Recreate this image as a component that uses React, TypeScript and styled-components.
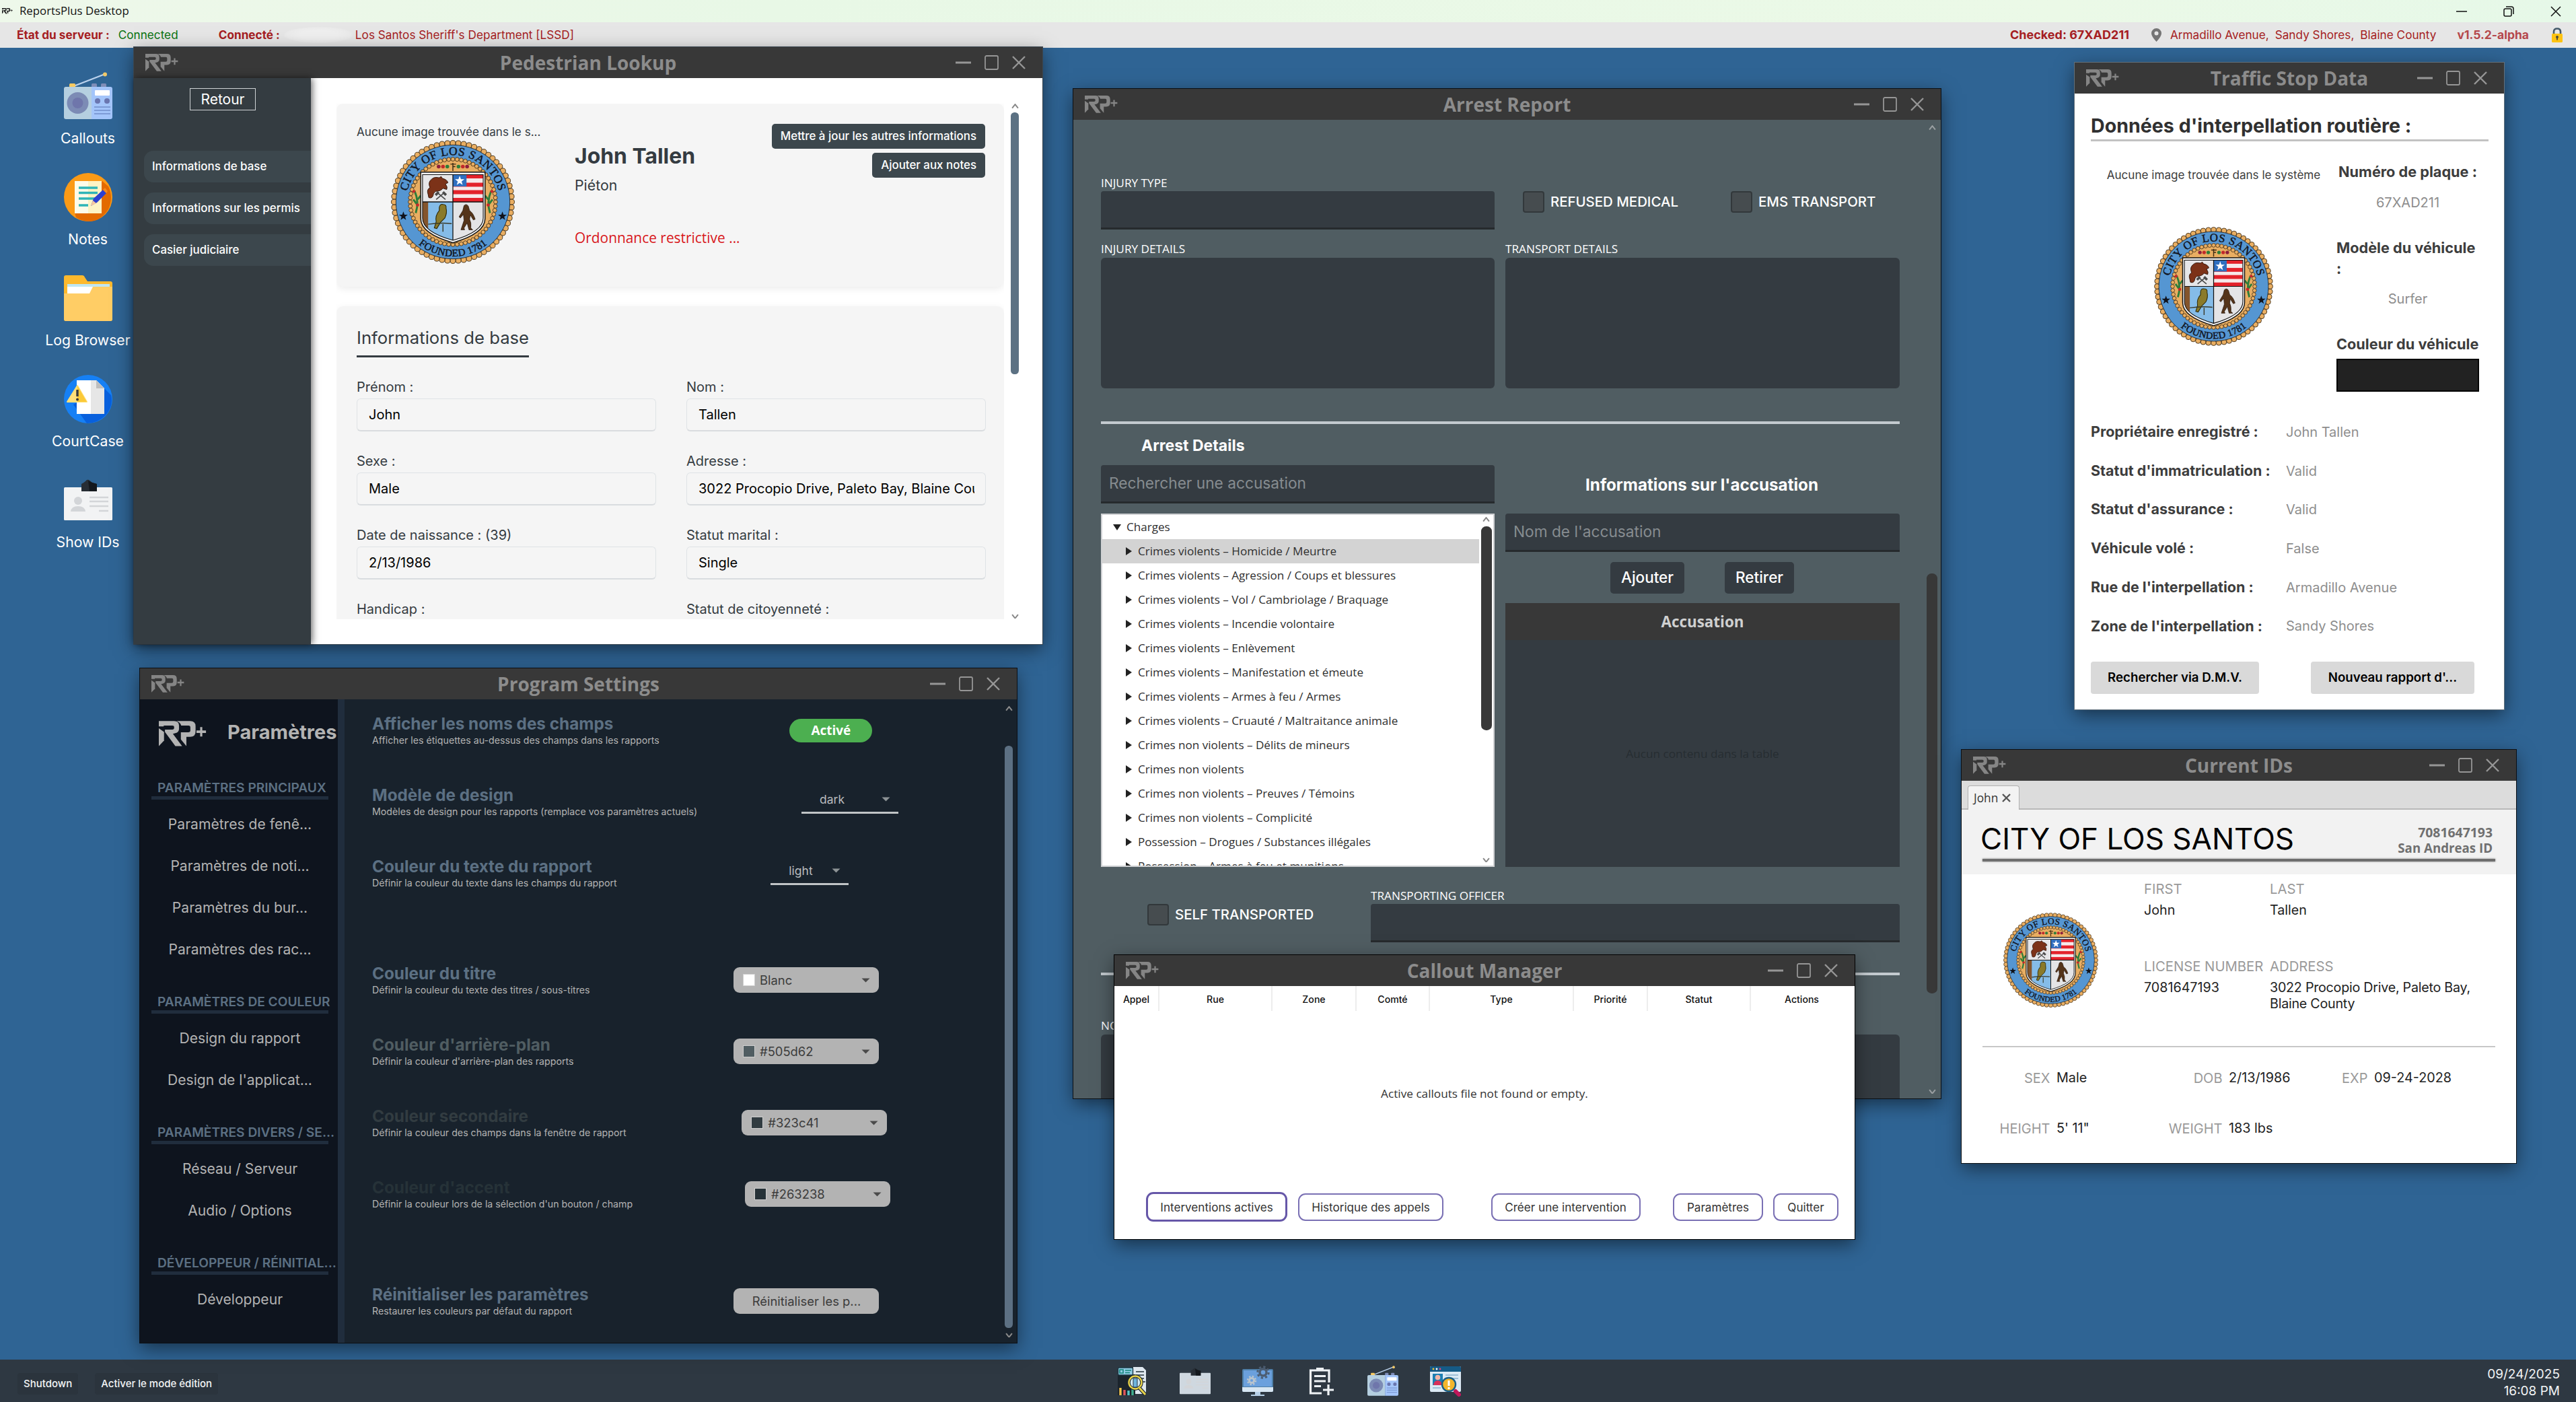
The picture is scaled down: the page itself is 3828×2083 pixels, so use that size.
import React from 'react';
import styled, { createGlobalStyle, css } from 'styled-components';

const INTER = '"Inter", "Liberation Sans", sans-serif';
const SEGOE = '"Open Sans", "Noto Sans", sans-serif';

const GlobalStyle = createGlobalStyle`
  *, *::before, *::after { box-sizing: border-box; }
  html, body { margin: 0; padding: 0; }
  body { width: 3828px; height: 2083px; overflow: hidden; background: #2f6494; font-family: ${INTER}; }
  button { font: inherit; margin: 0; padding: 0; border: 0; background: none; color: inherit; }
  svg { display: block; flex: none; }
`;

/* ---------- shell ---------- */

const Screen = styled.div`
  position: relative;
  display: flex;
  flex-direction: column;
  width: 3828px;
  height: 2083px;
  overflow: hidden;
  background: #2f6494;
  white-space: nowrap;
  line-height: 1;
`;

const OsBar = styled.header`
  display: flex;
  align-items: center;
  height: 33px;
  padding: 0 22px 0 3px;
  background: linear-gradient(90deg, #eef8ea, #e8f8e6 30%, #ebf9e7 80%, #e6f8e8);
  color: #111;
  font-family: ${SEGOE};
  font-size: 16.8px;
`;
const OsTitle = styled.span`
  margin-left: 10px;
  flex: 1;
`;
const OsControls = styled.div`
  display: flex;
  align-items: center;
  gap: 54px;
`;

const StatusBar = styled.div`
  display: flex;
  align-items: center;
  height: 38px;
  padding: 0 20px 0 25px;
  background: #e6e6e6;
  color: #a51d22;
  font-size: 17.2px;
`;
const StatusLabel = styled.span<{ $gap?: number }>`
  margin-left: ${p => p.$gap || 0}px;
  font-weight: 700;
`;
const StatusValue = styled.span<{ $ok?: boolean; $gap?: number }>`
  margin-left: ${p => p.$gap || 0}px;
  color: ${p => (p.$ok ? '#0a7310' : '#a51d22')};
`;
const HiddenName = styled.div`
  width: 102px;
  height: 24px;
  margin: 0 4px 0 6px;
  border-radius: 50% 30% 40% 50%;
  background: radial-gradient(ellipse, #efefef 40%, #ebebeb 65%, #e6e6e6 75%);
`;
const StatusRight = styled.div`
  display: flex;
  align-items: center;
  margin-left: auto;
`;
const CheckedPlate = styled.span`
  margin-right: 33px;
  font-size: 18px;
  font-weight: 700;
`;
const Place = styled.div`
  display: flex;
  gap: 9px;
  margin: 0 31px 0 13px;
`;
const Version = styled.span`
  margin-right: 34px;
  color: #b5484c;
  font-size: 17.5px;
  font-weight: 700;
`;

const Desktop = styled.main`
  flex: 1;
  padding: 36px 0 0 50px;
`;
const Shortcuts = styled.div`
  display: flex;
  flex-direction: column;
  gap: 38px;
  width: 161px;
`;
const Shortcut = styled.div`
  display: flex;
  flex-direction: column;
  align-items: center;
  gap: 13px;
  height: 112px;
  color: #fff;
  font-size: 21.2px;
  line-height: 26px;
`;

const Taskbar = styled.footer`
  display: grid;
  grid-template-columns: 1fr auto 1fr;
  align-items: center;
  height: 63px;
  padding: 0 24px 0 26px;
  background: #2e3842;
  color: #f2f4f5;
`;
const TaskLeft = styled.div`
  display: flex;
  gap: 25px;
  padding-top: 8px;
`;
const TaskButton = styled.button`
  height: 32px;
  padding: 0 9px;
  border-radius: 4px;
  background: #2b343d;
  font-size: 15px;
  font-weight: 500;
`;
const TaskIcons = styled.div`
  display: flex;
  gap: 47px;
`;
const Clock = styled.div`
  justify-self: end;
  padding-top: 5px;
  text-align: right;
  font-size: 19px;
  line-height: 25px;
`;

/* ---------- window ---------- */

const Frame = styled.section<{ $x: number; $y: number; $w: number; $h: number; $edge?: string }>`
  position: absolute;
  left: ${p => p.$x}px;
  top: ${p => p.$y}px;
  display: flex;
  flex-direction: column;
  width: ${p => p.$w}px;
  height: ${p => p.$h}px;
  background: #fff;
  box-shadow: 0 0 0 1px ${p => p.$edge || '#0b0f14'}, 0 8px 26px rgba(0, 0, 0, 0.5);
`;
const TitleBar = styled.div`
  display: grid;
  grid-template-columns: 1fr auto 1fr;
  align-items: center;
  flex: none;
  height: 46px;
  padding: 0 17px;
  background: #383838;
  color: #8c8c8c;
`;
const WinTitle = styled.h2`
  margin: 0;
  font-family: ${SEGOE};
  font-size: 28px;
  font-weight: 700;
  line-height: 40px;
`;
const WinControls = styled.div`
  display: flex;
  justify-content: flex-end;
  align-items: center;
  gap: 20px;
  padding-right: 8px;
`;

const Logo = ({ w, color }: { w: number; color: string }) => (
  <svg width={w} height={w * 0.53} viewBox="0 0 156 82" fill={color}>
    <path d="M0 0H50Q66 0 66 15V26Q66 37 54 40L46 42 76 82H54L20 36V28H44Q50 28 50 23V20Q50 15 44 15H16V18H0Z" />
    <path d="M0 24L17 36V64L0 82Z" />
    <path d="M58 0H102Q120 0 120 17V35Q120 52 102 52H90V82L72 60V37H96Q103 37 103 31V21Q103 15 97 15H73Q71 5 58 0Z" />
    <path d="M135 20h7v11h12v8h-12v12h-7V39h-12v-8h12Z" />
  </svg>
);

const Controls = () => (
  <WinControls>
    <svg width="23" height="24" viewBox="0 0 23 24"><path d="M0 12H23" stroke="#969696" strokeWidth="3" /></svg>
    <svg width="21" height="24" viewBox="0 0 21 24"><rect x="1" y="2" width="19" height="20" rx="2" fill="none" stroke="#969696" strokeWidth="1.8" /></svg>
    <svg width="20" height="24" viewBox="0 0 20 24"><path d="M1 3L19 21M19 3L1 21" stroke="#969696" strokeWidth="2.4" /></svg>
  </WinControls>
);

type WinProps = { x: number; y: number; w: number; h: number; title: string; edge?: string; children: React.ReactNode };
const Win = ({ x, y, w, h, title, edge, children }: WinProps) => (
  <Frame $x={x} $y={y} $w={w} $h={h} $edge={edge}>
    <TitleBar>
      <Logo w={49} color="#858585" />
      <WinTitle>{title}</WinTitle>
      <Controls />
    </TitleBar>
    {children}
  </Frame>
);

const Chevron = ({ down, color = '#888', w = 11 }: { down?: boolean; color?: string; w?: number }) => (
  <svg width={w} height={w * 0.7} viewBox="0 0 10 7">
    <path d={down ? 'M1 1L5 6L9 1' : 'M1 6L5 1L9 6'} fill="none" stroke={color} strokeWidth="1.8" />
  </svg>
);

/* ---------- seal ---------- */

const ring = (n: number, r: number, size: number) =>
  Array.from({ length: n }, (_, i) => {
    const a = (i / n) * Math.PI * 2;
    return <circle key={i} cx={Math.cos(a) * r} cy={Math.sin(a) * r} r={size} />;
  });

const STAR = 'M0 -6L1.5 -1.9 5.7 -1.9 2.3 .7 3.5 4.9 0 2.4 -3.5 4.9 -2.3 .7 -5.7 -1.9 -1.5 -1.9Z';

const Seal = ({ size, id }: { size: number; id: string }) => (
  <svg width={size} height={size} viewBox="-100 -100 200 200">
    <defs>
      <path id={`${id}-top`} d="M-73 20A75.700 75.700 0 1 1 73 20" />
      <path id={`${id}-low`} d="M-88 0A88 88 0 0 0 88 0" />
      <clipPath id={`${id}-shield`}><path d="M-49 -44H49V26Q49 48 0 62Q-49 48 -49 26Z" /></clipPath>
    </defs>
    <g fill="#e9ae62" stroke="#3b2a14" strokeWidth="1">{ring(68, 95, 4.4)}</g>
    <circle r="92" fill="#5596d2" stroke="#2a2a2a" strokeWidth="1" />
    <circle r="70" fill="#e9ae62" />
    <g fill="#e9ae62" stroke="#3b2a14" strokeWidth="0.9">{ring(64, 69, 3.2)}</g>
    <g fontFamily="'Liberation Serif', serif" fill="#10131c" stroke="#10131c" strokeWidth="0.5">
      <text fontSize="19">
        <textPath href={`#${id}-top`} startOffset="50%" textAnchor="middle" textLength="203">CITY OF LOS SANTOS</textPath>
      </text>
      <text fontSize="16.5">
        <textPath href={`#${id}-low`} startOffset="50%" textAnchor="middle" textLength="120">FOUNDED 1781</textPath>
      </text>
    </g>
    <path d={STAR} transform="translate(-80 23) scale(1.25)" fill="#10131c" />
    <path d={STAR} transform="translate(80 23) scale(1.25)" fill="#10131c" />
    <g>
      <path d="M0 -63V-50M-4 -61H5M0 -57H4" stroke="#3b2a14" strokeWidth="1.6" />
      <circle cx="-23" cy="-57" r="3" fill="#8d1f3c" /><circle cx="-16" cy="-57" r="3" fill="#c22a2a" />
      <circle cx="-9" cy="-57" r="3" fill="#2e7d3a" /><circle cx="9" cy="-57" r="3" fill="#2e7d3a" />
      <circle cx="16" cy="-57" r="3" fill="#c22a2a" /><circle cx="23" cy="-57" r="3" fill="#8d1f3c" />
    </g>
    <path d="M-60 18Q-54 0 -62 -18M-58 4L-64 -4M-57 -4L-52 -10" stroke="#2e7d3a" strokeWidth="3.2" fill="none" />
    <path d="M60 18Q54 0 62 -18M58 4L64 -4M57 -4L52 -10" stroke="#2e7d3a" strokeWidth="3.2" fill="none" />
    <g fill="#c8272c"><circle cx="-63" cy="-17" r="2.4" /><circle cx="-57" cy="5" r="2.6" /><circle cx="63" cy="-17" r="2.4" /><circle cx="57" cy="5" r="2.6" /></g>
    <path d="M-52 -48H52V27Q52 51 0 66Q-52 51 -52 27Z" fill="#f4f4f4" stroke="#111" strokeWidth="1.6" />
    <g clipPath={`url(#${id}-shield)`}>
      <rect x="-49" y="-44" width="49" height="44" fill="#e6e6e8" />
      <rect x="0" y="-44" width="49" height="44" fill="#f6e9ea" />
      <g fill="#e3222b">
        <rect x="0" y="-44" width="49" height="6" /><rect x="0" y="-31" width="49" height="6.5" />
        <rect x="0" y="-19" width="49" height="6.5" /><rect x="0" y="-6.5" width="49" height="6.5" />
      </g>
      <rect x="0" y="-44" width="22" height="19" fill="#2f6fc0" />
      <path d={STAR} transform="translate(11 -34) scale(1.35)" fill="#fff" />
      <rect x="-49" y="0" width="49" height="64" fill="#85bce8" />
      <rect x="0" y="0" width="49" height="64" fill="#e4e4e6" />
      <rect x="-49" y="0" width="9" height="64" fill="#84552c" />
      <path d="M-40 -12Q-43 -20 -37 -23Q-41 -32 -34 -37Q-30 -41 -22 -39L-19 -41 -17 -38Q-9 -36 -8 -31L-12 -29Q-8 -24 -10 -20L-16 -22Q-20 -17 -28 -17Q-32 -14 -32 -10Q-34 -5 -39 -7Z" fill="#7c3218" stroke="#2c1208" strokeWidth="1" />
      <path d="M-27 -4L-15 -14M-12 -4L-24 -14" stroke="#4a4a4a" strokeWidth="1.8" />
      <path d="M-28 -11L-23 -16M-16 -16L-11 -11" stroke="#4a4a4a" strokeWidth="4" />
      <path d="M-22 9Q-21 3 -16 4Q-10 4 -11 10Q-9 18 -13 26L-20 33 -26 43 -30 42 -27 32Q-29 22 -22 14Z" fill="#8a7a2a" stroke="#2b2708" strokeWidth="1.2" />
      <path d="M-40 36Q-20 33 -2 35M-16 36V48" stroke="#3b3b2a" strokeWidth="1.6" fill="none" />
      <path d="M18 6Q22 2 25 7L27 14Q33 18 36 28L33 29 28 21 27 28Q30 34 29 42L32 45H26L23 34 18 42 19 45H13L18 30 17 20 12 26 10 24 16 14Z" fill="#553419" stroke="#24140a" strokeWidth="0.8" />
      <path d="M0 -44V64M-49 0H49" stroke="#111" strokeWidth="1.4" />
    </g>
    <path d="M-49 -44H49V26Q49 48 0 62Q-49 48 -49 26Z" fill="none" stroke="#111" strokeWidth="1.2" />
  </svg>
);

/* ---------- desktop icons ---------- */

const Radio = ({ s }: { s: number }) => (
  <svg width={s} height={s} viewBox="0 0 72 72">
    <path d="M12 22L61 3" stroke="#bcd3ee" strokeWidth="2.2" /><circle cx="61" cy="3.5" r="3" fill="#f0c869" />
    <rect x="8" y="17" width="9" height="7" rx="1.5" fill="#f7ca62" />
    <rect x="41" y="17" width="8" height="7" rx="1.5" fill="#7f8db8" /><rect x="55" y="17" width="8" height="7" rx="1.5" fill="#7f8db8" />
    <path d="M3 22H41V70H3Q0 70 0 67V25Q0 22 3 22Z" fill="#b5cfe0" />
    <path d="M41 22H69Q72 22 72 25V67Q72 70 69 70H41Z" fill="#a4c5fa" />
    <ellipse cx="20.500" cy="46" rx="16" ry="16" fill="#7c8bb5" /><circle cx="20.500" cy="46" r="8" fill="#6f76ab" />
    <rect x="46" y="27" width="22" height="8" rx="1" fill="#fff" />
    <circle cx="50" cy="43" r="4" fill="#6a76b0" /><circle cx="64" cy="43" r="4" fill="#6a76b0" />
    <path d="M45 52H69M45 57H69M45 62H69" stroke="#7d9bd6" strokeWidth="2" />
  </svg>
);
const NotesIcon = () => (
  <svg width="72" height="72" viewBox="0 0 72 72">
    <circle cx="36" cy="36" r="36" fill="#fb9a16" />
    <path d="M57 12L66 20Q74 36 66 54Q56 70 40 72Q26 72 18 66L16 59Z" fill="#e36a00" />
    <rect x="16" y="12" width="40" height="48" fill="#fdfbe9" /><rect x="36" y="12" width="20" height="48" fill="#fdf3c4" />
    <path d="M22 22H50M22 29.500H50M22 38H46M22 48H36" stroke="#2fb5b7" strokeWidth="3.4" />
    <path d="M40 49L44 38 58 25 63 30 49 44Z" fill="#2c3fd0" /><path d="M40 49L43 41 48 45Z" fill="#f7c8a0" />
    <path d="M58 25L61 22 65 27 63 30Z" fill="#f58a1f" />
  </svg>
);
const FolderIcon = () => (
  <svg width="72" height="72" viewBox="0 0 72 72">
    <path d="M3 2H27Q30 2 31 5L35 11H69Q72 11 72 14V67Q72 70 69 70H3Q0 70 0 67V5Q0 2 3 2Z" fill="#fdb92d" />
    <rect x="5" y="15" width="63" height="14" fill="#bfe6f2" />
    <path d="M0 29H36L41 19H72V67Q72 70 69 70H3Q0 70 0 67Z" fill="#ffcd65" />
    <path d="M5 19H43L38 29H5Z" fill="#fff" />
  </svg>
);
const CourtIcon = () => (
  <svg width="72" height="72" viewBox="0 0 72 72">
    <circle cx="36" cy="36" r="36" fill="#1680f5" />
    <path d="M60 20L70 30Q74 46 62 60Q50 72 34 72L14 44Z" fill="#0860dd" />
    <path d="M19 8H48L60 20V58H19Z" fill="#fff" /><path d="M40 8H48L60 20V58H40Z" fill="#e6e6e6" /><path d="M48 8L60 20H48Z" fill="#bdbdbd" />
    <path d="M20 16L34 40H5Z" fill="#ffe07a" stroke="#ffe07a" strokeWidth="2" strokeLinejoin="round" /><path d="M20 16L34 40H20Z" fill="#fbc938" />
    <path d="M20 22V32" stroke="#3a3a3a" strokeWidth="3.4" /><circle cx="20" cy="36.500" r="2" fill="#3a3a3a" />
  </svg>
);
const IdIcon = ({ s, body = '#f2f3f4' }: { s: number; body?: string }) => (
  <svg width={s} height={s} viewBox="0 0 72 72">
    <rect x="0" y="17" width="72" height="49" rx="1.500" fill={body} />
    <path d="M26 12Q30 10 32 8Q34 5 37 6L42 10 49 12V23H26Z" fill="#272d34" /><path d="M36 7L42 10 49 12V23H38Z" fill="#14181d" />
    <circle cx="21" cy="37" r="6" fill="#d3d5d8" /><path d="M10 53Q11 45 21 45Q31 45 32 53Z" fill="#d3d5d8" />
    <path d="M38 32H66M38 38H66M38 45H66M52 52H66" stroke="#d3d5d8" strokeWidth="2.6" />
  </svg>
);
const ReportIcon = () => (
  <svg width="46" height="46" viewBox="0 0 46 46">
    <path d="M24 2H38L43 7V42H24Z" fill="#dfe8ef" /><path d="M28 9H40M28 14H40M28 19H40M30 24H42" stroke="#22303a" strokeWidth="1.6" />
    <rect x="1" y="13" width="26" height="31" fill="#1b242c" />
    <rect x="1.500" y="3" width="22" height="11" rx="1.500" fill="#8fcbe3" stroke="#1c3844" strokeWidth="1.4" />
    <path d="M4 6H9V11H4ZM12 7H21M12 10.500H19" stroke="#16867c" strokeWidth="1.6" fill="none" />
    <path d="M5 44V33" stroke="#f6c64b" strokeWidth="3.400" /><path d="M11 44V36" stroke="#e0565b" strokeWidth="3.400" />
    <path d="M17 44V37" stroke="#56c8ca" strokeWidth="3.400" /><path d="M23 44V34" stroke="#3fae8f" strokeWidth="3.400" />
    <circle cx="27" cy="25" r="9.500" fill="#cfe9f5" stroke="#1b242c" strokeWidth="4.500" /><circle cx="27" cy="25" r="9.500" fill="none" stroke="#e8d34a" strokeWidth="2.400" />
    <rect x="24" y="19" width="6" height="13" fill="#6fb4dd" stroke="#234" strokeWidth="1" />
    <path d="M33 33L42 43" stroke="#1b242c" strokeWidth="5.500" /><path d="M33 33L42 43" stroke="#e8d34a" strokeWidth="3" />
  </svg>
);
const MonitorIcon = () => (
  <svg width="46" height="46" viewBox="0 0 46 46">
    <rect x="0" y="5" width="46" height="34" rx="2" fill="#4e7fa8" /><rect x="2" y="7" width="42" height="24" fill="#6ba0dd" />
    <path d="M0 32H46V37Q46 39 44 39H2Q0 39 0 37Z" fill="#d7e6f2" /><path d="M19 39H27V43H33V45H13V43H19Z" fill="#b6cfe6" />
    <g fill="none" stroke="#4c5d72"><circle cx="31" cy="10" r="5" strokeWidth="3.500" /><circle cx="31" cy="10" r="8.200" strokeWidth="3" strokeDasharray="3.200 3.240" /></g>
    <g fill="none" stroke="#b8c4ce"><circle cx="14" cy="22" r="3.600" strokeWidth="3" /><circle cx="14" cy="22" r="6" strokeWidth="2.400" strokeDasharray="2.400 2.310" /></g>
  </svg>
);
const ClipPlusIcon = () => (
  <svg width="46" height="46" viewBox="0 0 46 46" fill="none" stroke="#eef2f5" strokeWidth="3.2">
    <path d="M25 41H8.500V7H36V25" /><path d="M17 5.500H28" strokeWidth="5" /><path d="M14 15.500H31M14 23H31M14 30.500H24" />
    <path d="M35 28V44M27 36H43" />
  </svg>
);
const BrowserIcon = () => (
  <svg width="46" height="46" viewBox="0 0 46 46">
    <rect x="0" y="1" width="46" height="38" rx="2" fill="#dceaf5" /><path d="M2 1H44Q46 1 46 3V9H0V3Q0 1 2 1Z" fill="#155a86" />
    <circle cx="5" cy="5" r="1.400" fill="#f5c02f" /><circle cx="10" cy="5" r="1.400" fill="#fff" /><circle cx="15" cy="5" r="1.400" fill="#e0457b" />
    <rect x="4" y="12" width="15" height="17" fill="#1d7fb3" /><circle cx="11.500" cy="17.500" r="3.800" fill="#f4b6a8" /><path d="M5 29Q6 22 11.500 22Q17 22 18 29Z" fill="#d8315b" />
    <path d="M23 14H42M23 19H42M4 33H16" stroke="#9fc0d8" strokeWidth="2" />
    <circle cx="28" cy="28" r="10" fill="#f3b62c" stroke="#1b5f86" strokeWidth="2.400" /><path d="M28 22V30" stroke="#fff" strokeWidth="3" /><circle cx="28" cy="33.500" r="1.700" fill="#fff" />
    <path d="M38 38L43 43" stroke="#c2185b" strokeWidth="6" strokeLinecap="round" />
  </svg>
);

/* ---------- pedestrian lookup ---------- */

const PedBody = styled.div`
  display: flex;
  flex: 1;
  min-height: 0;
`;
const PedSide = styled.nav`
  position: relative;
  display: flex;
  flex-direction: column;
  width: 263px;
  padding: 15px 0 0 15px;
  background: #343c41;
  box-shadow: 2px 0 10px rgba(0, 0, 0, 0.6);
  color: #fff;
`;
const BackButton = styled.button`
  width: 98px;
  height: 33px;
  margin: 0 0 60px 68px;
  border: 1px solid #cfd3d5;
  font-size: 21px;
`;
const SideItem = styled.button`
  height: 47px;
  margin-bottom: 15px;
  padding-left: 12px;
  border-radius: 14px 0 0 14px;
  background: #3c474d;
  font-size: 16.9px;
  font-weight: 500;
  text-align: left;
`;
const PedMain = styled.div`
  display: flex;
  flex: 1;
  padding: 38px 0 0 38px;
`;
const PedScroll = styled.div`
  width: 992px;
  height: 766px;
  overflow: hidden;
`;
const Card = styled.div`
  border-radius: 10px;
  background: #f5f5f5;
  box-shadow: 0 3px 12px rgba(0, 0, 0, 0.08);
  color: #343b41;
`;
const ProfileCard = styled(Card)`
  display: flex;
  height: 272px;
  padding: 30px 28px 0 30px;
`;
const Portrait = styled.div`
  display: flex;
  flex-direction: column;
  align-items: center;
  width: 286px;
  margin-right: 38px;
`;
const PortraitNote = styled.span`
  align-self: flex-start;
  font-size: 17.1px;
  line-height: 24px;
`;
const Identity = styled.div`
  padding-top: 28px;
`;
const FullName = styled.div`
  font-size: 31.9px;
  font-weight: 700;
  line-height: 40px;
`;
const Role = styled.div`
  margin-top: 8px;
  font-size: 21.3px;
  line-height: 30px;
`;
const Alert = styled.div`
  margin-top: 48px;
  color: #d8171b;
  font-family: ${SEGOE};
  font-size: 20.9px;
  line-height: 30px;
`;
const CardActions = styled.div`
  display: flex;
  flex-direction: column;
  align-items: flex-end;
  gap: 6px;
  margin-left: auto;
`;
const SlateButton = styled.button`
  height: 37px;
  padding: 0 13px;
  border-radius: 5px;
  background: #3c474d;
  color: #fff;
  font-size: 16.9px;
  font-weight: 500;
`;
const InfoCard = styled(Card)`
  height: 600px;
  margin-top: 29px;
  padding: 30px 27px 0 30px;
`;
const CardHeading = styled.h3`
  display: inline-block;
  margin: 0 0 33px;
  padding-bottom: 9px;
  border-bottom: 3px solid #343b41;
  font-size: 25.7px;
  font-weight: 400;
  line-height: 34px;
`;
const InfoGrid = styled.div`
  display: grid;
  grid-template-columns: 445px 445px;
  column-gap: 45px;
  row-gap: 33px;
`;
const InfoLabel = styled.div`
  font-size: 20px;
  line-height: 23px;
`;
const InfoField = styled.div`
  display: flex;
  align-items: center;
  height: 49px;
  margin-top: 5px;
  padding: 0 16px 0 17px;
  border: 1px solid #dfe3e6;
  border-bottom: 2px solid #d9dcdf;
  border-radius: 6px;
  color: #000;
  font-size: 20px;
  line-height: 30px;
`;
const InfoValue = styled.span`
  overflow: hidden;
`;
const ScrollTrack = styled.div<{ $w: number }>`
  display: flex;
  flex-direction: column;
  align-items: center;
  flex: none;
  width: ${p => p.$w}px;
`;
const Thumb = styled.div<{ $w: number; $h: number; $top: number; $bottom: number; $c: string }>`
  flex: none;
  width: ${p => p.$w}px;
  height: ${p => p.$h}px;
  margin: ${p => p.$top}px 0 ${p => p.$bottom}px;
  border-radius: ${p => p.$w / 2.2}px;
  background: ${p => p.$c};
`;

const PED_FIELDS = [
  ['Prénom :', 'John'], ['Nom :', 'Tallen'],
  ['Sexe :', 'Male'], ['Adresse :', '3022 Procopio Drive, Paleto Bay, Blaine County'],
  ['Date de naissance : (39)', '2/13/1986'], ['Statut marital :', 'Single'],
  ['Handicap :', ''], ['Statut de citoyenneté :', ''],
];

const PedestrianLookup = () => (
  <Win x={199} y={70} w={1350} h={887} title="Pedestrian Lookup" edge="#3a4650">
    <PedBody>
      <PedSide>
        <BackButton>Retour</BackButton>
        <SideItem>Informations de base</SideItem>
        <SideItem>Informations sur les permis</SideItem>
        <SideItem>Casier judiciaire</SideItem>
      </PedSide>
      <PedMain>
        <PedScroll>
          <ProfileCard>
            <Portrait>
              <PortraitNote>Aucune image trouvée dans le s...</PortraitNote>
              <Seal size={184} id="ped" />
            </Portrait>
            <Identity>
              <FullName>John Tallen</FullName>
              <Role>Piéton</Role>
              <Alert>Ordonnance restrictive ...</Alert>
            </Identity>
            <CardActions>
              <SlateButton>Mettre à jour les autres informations</SlateButton>
              <SlateButton>Ajouter aux notes</SlateButton>
            </CardActions>
          </ProfileCard>
          <InfoCard>
            <CardHeading>Informations de base</CardHeading>
            <InfoGrid>
              {PED_FIELDS.map(([label, value]) => (
                <div key={label}>
                  <InfoLabel>{label}</InfoLabel>
                  <InfoField><InfoValue>{value}</InfoValue></InfoField>
                </div>
              ))}
            </InfoGrid>
          </InfoCard>
        </PedScroll>
        <ScrollTrack $w={32}>
          <Chevron />
          <Thumb $w={12} $h={389} $top={5} $bottom={356} $c="#5c7183" />
          <Chevron down />
        </ScrollTrack>
      </PedMain>
    </PedBody>
  </Win>
);

/* ---------- settings ---------- */

const SetBody = styled.div`
  display: flex;
  flex: 1;
  min-height: 0;
  background: #18222c;
`;
const SetSide = styled.nav`
  width: 304px;
  padding-top: 32px;
  border-right: 10px solid #202d3d;
  background: #0e141e;
  color: #b3b3b3;
`;
const Brand = styled.div`
  display: flex;
  gap: 31px;
  height: 38px;
  padding-left: 28px;
  font-size: 29px;
  font-weight: 700;
  line-height: 33px;
`;
const SideSection = styled.div`
  width: 263px;
  margin: 49px 0 0 17px;
  & + & { margin-top: 34px; }
`;
const SideHeading = styled.div`
  height: 30px;
  margin-bottom: 6px;
  padding-left: 9px;
  border-bottom: 5px solid #202d3d;
  color: #5c7083;
  font-size: 19.15px;
  font-weight: 600;
  line-height: 25px;
`;
const SideLink = styled.div`
  font-size: 21.1px;
  line-height: 62px;
  text-align: center;
`;
const SetMain = styled.div`
  width: 978px;
  padding: 21px 0 0 41px;
`;
const SetRow = styled.div<{ $gap?: boolean }>`
  display: flex;
  height: 50px;
  margin-bottom: ${p => (p.$gap ? 109 : 56)}px;
`;
const SetText = styled.div`
  min-width: 353px;
`;
const SetTitle = styled.div<{ $c?: string }>`
  color: ${p => p.$c || '#5c7083'};
  font-size: 24.3px;
  font-weight: 700;
  line-height: 30px;
`;
const SetHint = styled.div`
  color: #b3b3b3;
  font-size: 14.2px;
  line-height: 20px;
`;
const SetControl = styled.div`
  display: flex;
  flex: 1;
  align-items: center;
  justify-content: center;
`;
const Toggle = styled.button`
  width: 123px;
  height: 35px;
  border-radius: 18px;
  background: #4caf50;
  color: #fff;
  font-family: ${SEGOE};
  font-size: 19px;
  font-weight: 700;
`;
const Picker = styled.div<{ $w: number }>`
  display: flex;
  align-items: center;
  justify-content: space-between;
  width: ${p => p.$w}px;
  height: 36px;
  padding: 0 12px 4px 27px;
  border-bottom: 3px solid #c0c4c6;
  color: #b9bcbe;
  font-size: 17.5px;
`;
const ColorBox = styled.div`
  display: flex;
  align-items: center;
  width: 216px;
  height: 38px;
  padding: 0 13px 0 14px;
  border-radius: 9px;
  background: #b3b3b3;
  color: #3c3c3c;
  font-size: 18.4px;
`;
const Swatch = styled.i<{ $c: string }>`
  width: 18px;
  height: 18px;
  margin-right: 7px;
  border: 1px solid #cfcfcf;
  background: ${p => p.$c};
`;
const ResetButton = styled(ColorBox)`
  justify-content: center;
`;
const Grow = styled.span`
  flex: 1;
`;
const Caret = ({ color }: { color: string }) => (
  <svg width="13" height="7" viewBox="0 0 13 7"><path d="M0.500 0.500H12.500L6.500 6.500Z" fill={color} /></svg>
);

const SIDE = [
  ['PARAMÈTRES PRINCIPAUX', 'Paramètres de fenê...', 'Paramètres de noti...', 'Paramètres du bur...', 'Paramètres des rac...'],
  ['PARAMÈTRES DE COULEUR', 'Design du rapport', "Design de l'applicat..."],
  ['PARAMÈTRES DIVERS / SE...', 'Réseau / Serveur', 'Audio / Options'],
  ['DÉVELOPPEUR / RÉINITIAL...', 'Développeur'],
];

const Setting = ({ title, hint, color, gap, children }: { title: string; hint: string; color?: string; gap?: boolean; children: React.ReactNode }) => (
  <SetRow $gap={gap}>
    <SetText>
      <SetTitle $c={color}>{title}</SetTitle>
      <SetHint>{hint}</SetHint>
    </SetText>
    <SetControl>{children}</SetControl>
  </SetRow>
);
const ColorPick = ({ c, name }: { c: string; name: string }) => (
  <ColorBox><Swatch $c={c} /><Grow>{name}</Grow><Caret color="#4a4a4a" /></ColorBox>
);

const ProgramSettings = () => (
  <Win x={208} y={993} w={1303} h={1002} title="Program Settings">
    <SetBody>
      <SetSide>
        <Brand><Logo w={71} color="#b3b3b3" />Paramètres</Brand>
        {SIDE.map(([head, ...links]) => (
          <SideSection key={head}>
            <SideHeading>{head}</SideHeading>
            {links.map(l => <SideLink key={l}>{l}</SideLink>)}
          </SideSection>
        ))}
      </SetSide>
      <SetMain>
        <Setting title="Afficher les noms des champs" hint="Afficher les étiquettes au-dessus des champs dans les rapports"><Toggle>Activé</Toggle></Setting>
        <Setting title="Modèle de design" hint="Modèles de design pour les rapports (remplace vos paramètres actuels)"><Picker $w={144}>dark<Caret color="#8d9396" /></Picker></Setting>
        <Setting gap title="Couleur du texte du rapport" hint="Définir la couleur du texte dans les champs du rapport"><Picker $w={116}>light<Caret color="#8d9396" /></Picker></Setting>
        <Setting title="Couleur du titre" hint="Définir la couleur du texte des titres / sous-titres"><ColorPick c="#ffffff" name="Blanc" /></Setting>
        <Setting color="#505d62" title="Couleur d'arrière-plan" hint="Définir la couleur d'arrière-plan des rapports"><ColorPick c="#505d62" name="#505d62" /></Setting>
        <Setting color="#323c41" title="Couleur secondaire" hint="Définir la couleur des champs dans la fenêtre de rapport"><ColorPick c="#323c41" name="#323c41" /></Setting>
        <Setting gap color="#263238" title="Couleur d'accent" hint="Définir la couleur lors de la sélection d'un bouton / champ"><ColorPick c="#263238" name="#263238" /></Setting>
        <Setting title="Réinitialiser les paramètres" hint="Restaurer les couleurs par défaut du rapport"><ResetButton>Réinitialiser les p...</ResetButton></Setting>
      </SetMain>
      <ScrollTrack $w={18}>
        <Thumb $w={1} $h={0} $top={10} $bottom={0} $c="transparent" />
        <Chevron color="#8c8c8c" />
        <Thumb $w={12} $h={865} $top={51} $bottom={7} $c="#5c7083" />
        <Chevron down color="#8c8c8c" />
      </ScrollTrack>
    </SetBody>
  </Win>
);

/* ---------- arrest report ---------- */

const ArrestBody = styled.div`
  display: flex;
  flex: 1;
  min-height: 0;
  overflow: hidden;
  padding-left: 41px;
  background: #505d62;
  color: #fff;
`;
const Form = styled.div`
  flex: none;
  width: 1187px;
  margin-right: 39px;
`;
const TwoCols = styled.div<{ $top: number }>`
  display: grid;
  grid-template-columns: 585px 586px;
  column-gap: 16px;
  padding-top: ${p => p.$top}px;
`;
const FieldLabel = styled.div`
  font-family: ${SEGOE};
  font-size: 17.2px;
  line-height: 20px;
`;
const darkField = css`
  background: #343b41;
`;
const Input = styled.div<{ $top?: number }>`
  ${darkField}
  display: flex;
  align-items: center;
  height: 57px;
  margin-top: ${p => p.$top || 0}px;
  padding-left: 12px;
  border-bottom: 3px solid #262a2d;
  border-radius: 4px 4px 0 0;
  color: #868c90;
  font-size: 22.7px;
`;
const TextArea = styled.div`
  ${darkField}
  height: 194px;
  margin-top: 3px;
  border-radius: 6px;
`;
const Checks = styled.div`
  display: grid;
  grid-template-columns: 309px auto;
  align-items: start;
  padding: 22px 0 0 26px;
`;
const Check = styled.label`
  display: flex;
  align-items: center;
  gap: 9px;
  font-size: 20.4px;
  font-weight: 500;
`;
const Box = styled.i`
  width: 32px;
  height: 32px;
  border: 2px solid #32383b;
  border-radius: 4px;
  background: #464c4f;
`;
const Rule = styled.div<{ $top: number }>`
  height: 4px;
  margin-top: ${p => p.$top}px;
  background: #c3cacf;
`;
const PartTitle = styled.div`
  padding-left: 60px;
  margin-bottom: 15px;
  font-size: 23px;
  font-weight: 700;
  line-height: 28px;
`;
const Tree = styled.div`
  display: flex;
  height: 525px;
  margin-top: 15px;
  border: 2px solid #cfd1d3;
  background: #fff;
  color: #2f2f2f;
  overflow: hidden;
`;
const TreeRows = styled.div`
  width: 560px;
`;
const TreeRow = styled.div<{ $root?: boolean; $on?: boolean }>`
  display: flex;
  align-items: center;
  gap: 8px;
  height: 36px;
  padding-left: ${p => (p.$root ? 16 : 35)}px;
  background: ${p => (p.$on ? '#d3d3d3' : 'transparent')};
  font-family: ${SEGOE};
  font-size: 17.1px;
`;
const ChargeTitle = styled.div`
  padding: 59px 2px 0 0;
  font-size: 24.2px;
  font-weight: 700;
  line-height: 28px;
  text-align: center;
`;
const ChargeActions = styled.div`
  display: flex;
  justify-content: center;
  gap: 60px;
  margin: 15px 0 14px;
  padding-right: 1px;
`;
const ChargeButton = styled.button`
  ${darkField}
  height: 47px;
  padding: 0 16px;
  border-radius: 5px;
  font-size: 22.5px;
  font-weight: 500;
`;
const ChargeTable = styled.div`
  ${darkField}
  display: flex;
  flex-direction: column;
  height: 392px;
  font-family: ${SEGOE};
`;
const ChargeHead = styled.div`
  background: #383838;
  color: #cfd0d0;
  font-size: 22.4px;
  font-weight: 700;
  line-height: 55px;
  text-align: center;
`;
const ChargeEmpty = styled.div`
  display: grid;
  flex: 1;
  place-items: center;
  color: #262d31;
  font-size: 17.2px;
`;
const TransportRow = styled.div`
  display: grid;
  grid-template-columns: 401px 786px;
  align-items: start;
  padding-top: 33px;
`;
const SelfCheck = styled.div`
  padding: 22px 0 0 69px;
`;
const Notes = styled.div`
  padding-top: 65px;
`;

const CHARGES = [
  'Crimes violents – Homicide / Meurtre', 'Crimes violents – Agression / Coups et blessures',
  'Crimes violents – Vol / Cambriolage / Braquage', 'Crimes violents – Incendie volontaire',
  'Crimes violents – Enlèvement', 'Crimes violents – Manifestation et émeute',
  'Crimes violents – Armes à feu / Armes', 'Crimes violents – Cruauté / Maltraitance animale',
  'Crimes non violents – Délits de mineurs', 'Crimes non violents',
  'Crimes non violents – Preuves / Témoins', 'Crimes non violents – Complicité',
  'Possession – Drogues / Substances illégales', 'Possession – Armes à feu et munitions',
];

const ArrestReport = () => (
  <Win x={1595} y={132} w={1289} h={1500} title="Arrest Report">
    <ArrestBody>
      <Form>
        <TwoCols $top={84}>
          <div><FieldLabel>INJURY TYPE</FieldLabel><Input $top={2} /></div>
          <Checks>
            <Check><Box />REFUSED MEDICAL</Check>
            <Check><Box />EMS TRANSPORT</Check>
          </Checks>
        </TwoCols>
        <TwoCols $top={19}>
          <div><FieldLabel>INJURY DETAILS</FieldLabel><TextArea /></div>
          <div><FieldLabel>TRANSPORT DETAILS</FieldLabel><TextArea /></div>
        </TwoCols>
        <Rule $top={49} />
        <TwoCols $top={18}>
          <div>
            <PartTitle>Arrest Details</PartTitle>
            <Input>Rechercher une accusation</Input>
            <Tree>
              <TreeRows>
                <TreeRow $root>
                  <svg width="12" height="9" viewBox="0 0 12 9"><path d="M0 0H12L6 9Z" fill="#222" /></svg>
                  Charges
                </TreeRow>
                {CHARGES.map((c, i) => (
                  <TreeRow key={c} $on={i === 0}>
                    <svg width="10" height="12" viewBox="0 0 10 12"><path d="M0 0L9 6L0 12Z" fill="#222" /></svg>
                    {c}
                  </TreeRow>
                ))}
              </TreeRows>
              <ScrollTrack $w={21}>
                <Thumb $w={1} $h={0} $top={3} $bottom={0} $c="transparent" />
                <Chevron />
                <Thumb $w={16} $h={303} $top={6} $bottom={189} $c="#383838" />
                <Chevron down />
              </ScrollTrack>
            </Tree>
          </div>
          <div>
            <ChargeTitle>Informations sur l'accusation</ChargeTitle>
            <Input $top={28}>Nom de l'accusation</Input>
            <ChargeActions><ChargeButton>Ajouter</ChargeButton><ChargeButton>Retirer</ChargeButton></ChargeActions>
            <ChargeTable>
              <ChargeHead>Accusation</ChargeHead>
              <ChargeEmpty>Aucun contenu dans la table</ChargeEmpty>
            </ChargeTable>
          </div>
        </TwoCols>
        <TransportRow>
          <SelfCheck><Check><Box />SELF TRANSPORTED</Check></SelfCheck>
          <div><FieldLabel>TRANSPORTING OFFICER</FieldLabel><Input $top={2} /></div>
        </TransportRow>
        <Rule $top={45} />
        <Notes><FieldLabel>NOTES</FieldLabel><TextArea /></Notes>
      </Form>
      <ScrollTrack $w={18}>
        <Thumb $w={1} $h={0} $top={8} $bottom={0} $c="transparent" />
        <Chevron color="#9a9fa2" />
        <Thumb $w={16} $h={624} $top={658} $bottom={142} $c="#383838" />
        <Chevron down color="#9a9fa2" />
      </ScrollTrack>
    </ArrestBody>
  </Win>
);

/* ---------- callout manager ---------- */

const CallHead = styled.div`
  display: grid;
  grid-template-columns: 67px 168px 125px 109px 214px 110px 153px 151px;
  height: 37px;
  color: #111;
  font-size: 14.1px;
  font-weight: 500;
`;
const CallCol = styled.div`
  display: grid;
  place-items: center;
  padding-top: 4px;
  border-right: 2px solid #ededed;
  &:last-child { border-right: 0; }
`;
const CallEmpty = styled.div`
  display: grid;
  place-items: center;
  height: 246px;
  color: #333;
  font-family: ${SEGOE};
  font-size: 17.2px;
`;
const CallFooter = styled.div`
  display: flex;
  align-items: center;
  justify-content: space-between;
  height: 94px;
  padding: 0 24px 2px 47px;
`;
const ButtonGroup = styled.div<{ $gap: number }>`
  display: flex;
  align-items: center;
  gap: ${p => p.$gap}px;
`;
const OutlineButton = styled.button<{ $w: number; $on?: boolean }>`
  width: ${p => p.$w}px;
  height: ${p => (p.$on ? 44 : 41)}px;
  border: ${p => (p.$on ? '3px solid #6657a8' : '2px solid #7a70b4')};
  border-radius: 11px;
  background: #fff;
  color: #333;
  font-size: 17.1px;
`;
const Middle = styled(ButtonGroup)`
  margin-left: 22px;
`;

const CalloutManager = () => (
  <Win x={1656} y={1419} w={1100} h={422} title="Callout Manager" edge="#000">
    <CallHead>
      {['Appel', 'Rue', 'Zone', 'Comté', 'Type', 'Priorité', 'Statut', 'Actions'].map(c => <CallCol key={c}>{c}</CallCol>)}
    </CallHead>
    <CallEmpty>Active callouts file not found or empty.</CallEmpty>
    <CallFooter>
      <ButtonGroup $gap={16}>
        <OutlineButton $w={210} $on>Interventions actives</OutlineButton>
        <OutlineButton $w={216}>Historique des appels</OutlineButton>
      </ButtonGroup>
      <Middle $gap={0}><OutlineButton $w={222}>Créer une intervention</OutlineButton></Middle>
      <ButtonGroup $gap={15}>
        <OutlineButton $w={134}>Paramètres</OutlineButton>
        <OutlineButton $w={97}>Quitter</OutlineButton>
      </ButtonGroup>
    </CallFooter>
  </Win>
);

/* ---------- traffic stop ---------- */

const StopBody = styled.div`
  padding: 30px 24px 0 24px;
  color: #3d3d3d;
`;
const StopHeading = styled.h3`
  margin: 0;
  width: 591px;
  height: 41px;
  border-bottom: 3px solid #c2c2c2;
  color: #303030;
  font-size: 28.6px;
  font-weight: 700;
  line-height: 36px;
`;
const StopTop = styled.div`
  display: grid;
  grid-template-columns: 365px 212px;
`;
const StopImage = styled.div`
  display: flex;
  flex-direction: column;
  align-items: center;
  gap: 65px;
  padding-top: 38px;
  font-size: 17.1px;
  line-height: 24px;
`;
const StopFacts = styled.div`
  display: flex;
  flex-direction: column;
  align-items: center;
  padding-top: 30px;
`;
const FactLabel = styled.div<{ $top?: number }>`
  width: 212px;
  margin-top: ${p => p.$top || 0}px;
  font-size: 21.700px;
  font-weight: 700;
  line-height: 31px;
  text-align: ${p => (p.$top ? 'left' : 'center')};
`;
const FactValue = styled.div<{ $top: number }>`
  margin-top: ${p => p.$top}px;
  color: #8e8e8e;
  font-size: 20px;
  line-height: 30px;
`;
const PlateColor = styled.div`
  width: 212px;
  height: 49px;
  margin-top: 6px;
  border: 2px solid #050505;
  background: #222;
`;
const StopRows = styled.div`
  padding-top: 31px;
`;
const StopRow = styled.div`
  display: grid;
  grid-template-columns: 290px auto;
  align-items: center;
  height: 57.700px;
`;
const RowKey = styled.span`
  font-size: 21.500px;
  font-weight: 700;
`;
const RowValue = styled.span`
  color: #8e8e8e;
  font-size: 20px;
`;
const StopActions = styled.div`
  display: flex;
  justify-content: space-between;
  width: 570px;
  padding-top: 24px;
`;
const GreyButton = styled.button<{ $w: number }>`
  width: ${p => p.$w}px;
  height: 48px;
  border-radius: 4px;
  background: #d9d9d9;
  color: #000;
  font-size: 18.700px;
  font-weight: 600;
`;

const STOP_ROWS = [
  ['Propriétaire enregistré :', 'John Tallen'], ["Statut d'immatriculation :", 'Valid'],
  ["Statut d'assurance :", 'Valid'], ['Véhicule volé :', 'False'],
  ["Rue de l'interpellation :", 'Armadillo Avenue'], ["Zone de l'interpellation :", 'Sandy Shores'],
];

const TrafficStop = () => (
  <Win x={3083} y={93} w={638} h={961} title="Traffic Stop Data" edge="#62717c">
    <StopBody>
      <StopHeading>Données d'interpellation routière :</StopHeading>
      <StopTop>
        <StopImage>Aucune image trouvée dans le système<Seal size={177} id="stop" /></StopImage>
        <StopFacts>
          <FactLabel>Numéro de plaque :</FactLabel>
          <FactValue $top={15}>67XAD211</FactValue>
          <FactLabel $top={37}>Modèle du véhicule<br />:</FactLabel>
          <FactValue $top={14}>Surfer</FactValue>
          <FactLabel $top={37}>Couleur du véhicule</FactLabel>
          <PlateColor />
        </StopFacts>
      </StopTop>
      <StopRows>
        {STOP_ROWS.map(([k, v]) => <StopRow key={k}><RowKey>{k}</RowKey><RowValue>{v}</RowValue></StopRow>)}
      </StopRows>
      <StopActions>
        <GreyButton $w={250}>Rechercher via D.M.V.</GreyButton>
        <GreyButton $w={243}>Nouveau rapport d'...</GreyButton>
      </StopActions>
    </StopBody>
  </Win>
);

/* ---------- current ids ---------- */

const TabStrip = styled.div`
  display: flex;
  align-items: flex-end;
  height: 43px;
  padding-left: 9px;
  border-bottom: 2px solid #b9b9b9;
  background: #dcdcdc;
`;
const Tab = styled.div`
  display: flex;
  align-items: center;
  gap: 6px;
  width: 77px;
  height: 36px;
  margin-bottom: -2px;
  padding-left: 8px;
  border: 1px solid #b0b0b0;
  border-bottom: 0;
  border-radius: 4px 4px 0 0;
  background: #f3f3f3;
  color: #333;
  font-family: ${SEGOE};
  font-size: 17.300px;
`;
const IdHeader = styled.div`
  height: 96px;
  padding: 17px 31px 0 28px;
  background: #f2f2f2;
`;
const IdHeadRow = styled.div`
  display: flex;
  justify-content: space-between;
  height: 56px;
  padding-right: 4px;
`;
const IdState = styled.div`
  color: #000;
  font-size: 44px;
  line-height: 52px;
`;
const IdNumber = styled.div`
  padding-top: 5px;
  color: #707070;
  font-family: ${SEGOE};
  font-size: 19.400px;
  font-weight: 700;
  line-height: 23px;
  text-align: right;
`;
const IdKind = styled.div`
  font-size: 18.700px;
`;
const IdBar = styled.div`
  height: 4px;
  margin-left: 3px;
  background: #6e6e6e;
  box-shadow: 0 0 3px #8a8a8a;
`;
const IdMain = styled.div`
  display: flex;
  height: 255px;
  padding: 0 0 0 62px;
  color: #222;
`;
const IdPhoto = styled.div`
  width: 209px;
  padding-top: 57px;
`;
const IdFields = styled.div`
  display: grid;
  grid-template-columns: 187px auto;
  grid-template-rows: 114.500px auto;
  padding-top: 9px;
`;
const IdLabel = styled.div`
  color: #9a9a9a;
  font-size: 20.300px;
  line-height: 26px;
`;
const IdValue = styled.div<{ $tight?: boolean }>`
  padding-top: 6px;
  font-size: 19.700px;
  line-height: 24.500px;
  letter-spacing: ${p => (p.$tight ? '-0.25px' : 'normal')};
`;
const IdDivider = styled.div`
  height: 2px;
  margin: 0 31px 0 31px;
  background: #c8c8c8;
`;
const IdStats = styled.div`
  display: grid;
  grid-template-columns: 133px 155px 85px 140px 60px auto;
  column-gap: 8px;
  grid-auto-rows: 75.500px;
  align-items: center;
  padding-top: 8px;
`;
const StatKey = styled.span`
  justify-self: end;
  padding-right: 1.500px;
  color: #9a9a9a;
  font-size: 20px;
`;
const StatValue = styled.span`
  color: #222;
  font-size: 19.800px;
`;

const CurrentIds = () => (
  <Win x={2915} y={1114} w={824} h={614} title="Current IDs">
    <TabStrip>
      <Tab>John<svg width="13" height="13" viewBox="0 0 13 13"><path d="M1 1L12 12M12 1L1 12" stroke="#555" strokeWidth="2.400" /></svg></Tab>
    </TabStrip>
    <IdHeader>
      <IdHeadRow>
        <IdState>CITY OF LOS SANTOS</IdState>
        <IdNumber>7081647193<IdKind>San Andreas ID</IdKind></IdNumber>
      </IdHeadRow>
      <IdBar />
    </IdHeader>
    <IdMain>
      <IdPhoto><Seal size={141} id="ids" /></IdPhoto>
      <IdFields>
        <div><IdLabel>FIRST</IdLabel><IdValue>John</IdValue></div>
        <div><IdLabel>LAST</IdLabel><IdValue>Tallen</IdValue></div>
        <div><IdLabel>LICENSE NUMBER</IdLabel><IdValue>7081647193</IdValue></div>
        <div><IdLabel>ADDRESS</IdLabel><IdValue $tight>3022 Procopio Drive, Paleto Bay,<br />Blaine County</IdValue></div>
      </IdFields>
    </IdMain>
    <IdDivider />
    <IdStats>
      <StatKey>SEX</StatKey><StatValue>Male</StatValue>
      <StatKey>DOB</StatKey><StatValue>2/13/1986</StatValue>
      <StatKey>EXP</StatKey><StatValue>09-24-2028</StatValue>
      <StatKey>HEIGHT</StatKey><StatValue>5' 11"</StatValue>
      <StatKey>WEIGHT</StatKey><StatValue>183 lbs</StatValue>
    </IdStats>
  </Win>
);

/* ---------- app ---------- */

export default function App() {
  return (
    <Screen>
      <GlobalStyle />
      <OsBar>
        <Logo w={16} color="#222" />
        <OsTitle>ReportsPlus Desktop</OsTitle>
        <OsControls>
          <svg width="16" height="16" viewBox="0 0 16 16"><path d="M0 8H16" stroke="#111" strokeWidth="1.500" /></svg>
          <svg width="16" height="16" viewBox="0 0 16 16" fill="none" stroke="#111" strokeWidth="1.500"><rect x="1" y="4" width="11" height="11" rx="2" /><path d="M4 1H12Q15 1 15 4V12" /></svg>
          <svg width="16" height="16" viewBox="0 0 16 16"><path d="M1 1L15 15M15 1L1 15" stroke="#111" strokeWidth="1.500" /></svg>
        </OsControls>
      </OsBar>
      <StatusBar>
        <StatusLabel>État du serveur :</StatusLabel>
        <StatusValue $ok $gap={13}>Connected</StatusValue>
        <StatusLabel $gap={60}>Connecté :</StatusLabel>
        <HiddenName />
        <StatusValue>Los Santos Sheriff's Department [LSSD]</StatusValue>
        <StatusRight>
          <CheckedPlate>Checked: 67XAD211</CheckedPlate>
          <svg width="15" height="20" viewBox="0 0 15 20"><path fillRule="evenodd" d="M7.500 0A7.500 7.500 0 0 1 15 7.500Q15 12 7.500 20Q0 12 0 7.500A7.500 7.500 0 0 1 7.500 0ZM7.500 4.500A3 3 0 1 0 7.500 10.500A3 3 0 1 0 7.500 4.500Z" fill="#757575" /></svg>
          <Place><span>Armadillo Avenue,</span><span>Sandy Shores,</span><span>Blaine County</span></Place>
          <Version>v1.5.2-alpha</Version>
          <svg width="16" height="22" viewBox="0 0 16 22"><path d="M3 10V6Q3 1.500 8 1.500Q13 1.500 13 6V10" fill="none" stroke="#455a6a" strokeWidth="2.600" /><rect y="9" width="16" height="13" rx="1.500" fill="#fdc312" /><circle cx="8" cy="14" r="2" fill="#4a4a3a" /><path d="M8 14V18.500" stroke="#4a4a3a" strokeWidth="1.800" /></svg>
        </StatusRight>
      </StatusBar>
      <Desktop>
        <Shortcuts>
          <Shortcut><Radio s={72} />Callouts</Shortcut>
          <Shortcut><NotesIcon />Notes</Shortcut>
          <Shortcut><FolderIcon />Log Browser</Shortcut>
          <Shortcut><CourtIcon />CourtCase</Shortcut>
          <Shortcut><IdIcon s={72} />Show IDs</Shortcut>
        </Shortcuts>
      </Desktop>
      <Taskbar>
        <TaskLeft>
          <TaskButton>Shutdown</TaskButton>
          <TaskButton>Activer le mode édition</TaskButton>
        </TaskLeft>
        <TaskIcons>
          <ReportIcon />
          <IdIcon s={46} body="#cfd8e0" />
          <MonitorIcon />
          <ClipPlusIcon />
          <Radio s={46} />
          <BrowserIcon />
        </TaskIcons>
        <Clock>09/24/2025<br />16:08 PM</Clock>
      </Taskbar>
      <PedestrianLookup />
      <ProgramSettings />
      <ArrestReport />
      <CalloutManager />
      <TrafficStop />
      <CurrentIds />
    </Screen>
  );
}
